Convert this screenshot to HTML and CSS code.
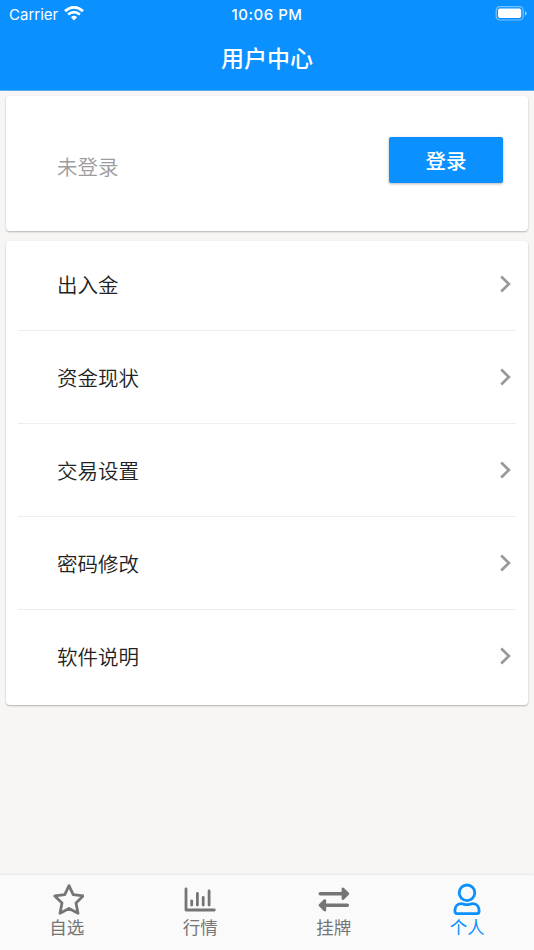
FILE: index.html
```
<!DOCTYPE html>
<html lang="zh-CN">
<head>
    <meta charset="UTF-8">
    <title>用户中心</title>
    <link rel="stylesheet" href="styles.css">
</head>
<body>
    <header class="header">
        <div class="status-bar">
            <div class="carrier">
                <span>Carrier</span>
                <svg class="wifi" width="20" height="15" viewBox="0 0 20 15">
                    <path d="M1 5.2Q10 -2.6 19 5.2" fill="none" stroke="#fff" stroke-width="2.9"/>
                    <path d="M4.1 8.6Q10 3.6 15.9 8.6" fill="none" stroke="#fff" stroke-width="2.6"/>
                    <path d="M6.9 11.2Q10 8.4 13.1 11.2L10 14.4Z" fill="#fff"/>
                </svg>
            </div>
            <div class="time">10:06 PM</div>
            <div class="battery">
                <svg width="32" height="16" viewBox="0 0 32 16">
                    <rect x="1.2" y="0.6" width="27" height="13.4" rx="3.8" fill="none" stroke="#fff" stroke-opacity=".45" stroke-width="1.2"/>
                    <rect x="3" y="2.6" width="23.2" height="9.5" rx="2" fill="#fff"/>
                    <path d="M30 4.9Q31.7 5.6 31.7 7.3Q31.7 9.1 30 9.7Z" fill="#fff" fill-opacity=".55"/>
                </svg>
            </div>
        </div>
        <h1 class="title">用户中心</h1>
    </header>

    <main class="content">
        <section class="card login-card">
            <span class="login-state">未登录</span>
            <button class="login-btn">登录</button>
        </section>

        <section class="card menu-card">
            <ul class="menu">
                <li><span>出入金</span><svg class="arrow" viewBox="0 0 12 18"><path d="M1.2 1.5L8.9 9L1.2 16.5"/></svg></li>
                <li><span>资金现状</span><svg class="arrow" viewBox="0 0 12 18"><path d="M1.2 1.5L8.9 9L1.2 16.5"/></svg></li>
                <li><span>交易设置</span><svg class="arrow" viewBox="0 0 12 18"><path d="M1.2 1.5L8.9 9L1.2 16.5"/></svg></li>
                <li><span>密码修改</span><svg class="arrow" viewBox="0 0 12 18"><path d="M1.2 1.5L8.9 9L1.2 16.5"/></svg></li>
                <li><span>软件说明</span><svg class="arrow" viewBox="0 0 12 18"><path d="M1.2 1.5L8.9 9L1.2 16.5"/></svg></li>
            </ul>
        </section>
    </main>

    <nav class="tabs">
        <a class="tab">
            <svg class="tab-icon" viewBox="0 0 34 34">
                <path d="M19 3.6L23.2 12.6L33.2 13.9L26 20.9L28 31.3L19 26.5L10 31.3L12 20.9L4.8 13.9L14.8 12.6Z"/>
            </svg>
            <span>自选</span>
        </a>
        <a class="tab">
            <svg class="tab-icon" viewBox="0 0 34 34">
                <path d="M3 7V28H31.3M8.7 18.8V23M14.4 11.3V23M20.2 15.3V23M26.1 9V23"/>
            </svg>
            <span>行情</span>
        </a>
        <a class="tab">
            <svg class="tab-icon" viewBox="0 0 34 34">
                <path class="bar" d="M3.3 11.7H26M10 23.3H30.3"/>
                <path class="head" d="M26 7L30.8 11.7L26 16.4ZM7.8 18.6L3 23.3L7.8 28Z"/>
            </svg>
            <span>挂牌</span>
        </a>
        <a class="tab active">
            <svg class="tab-icon" viewBox="0 0 34 34">
                <circle cx="17" cy="10.8" r="7.8"/>
                <path d="M11 21.6C13 21.6 14.2 22.6 17 22.6S21 21.6 23 21.6C27 21.6 29.1 25 29.1 29Q29.1 31.6 27 31.6H7Q4.9 31.6 4.9 29C4.9 25 7 21.6 11 21.6Z"/>
            </svg>
            <span>个人</span>
        </a>
    </nav>
</body>
</html>
```

FILE: styles.css
```
* {
    box-sizing: border-box;
}
body {
    margin: 0;
    height: 950px;
    display: flex;
    flex-direction: column;
    overflow: hidden;
    background: #f7f6f4;
    color: #222;
    font-family: "Noto Sans CJK SC", sans-serif;
    font-weight: 350;
}
.header {
    height: 91px;
    background: #0a90ff;
    border-bottom: 1px solid #51aefb;
    color: #fff;
}
.status-bar {
    display: grid;
    grid-template-columns: 1fr auto 1fr;
    align-items: center;
    height: 28px;
    padding: 0 7px 0 9px;
    font-family: Inter, sans-serif;
    font-size: 15px;
    font-weight: 400;
}
.carrier {
    display: flex;
    align-items: center;
    gap: 6px;
}
.wifi {
    margin-top: -2px;
}
.time {
    margin-left: -2px;
    font-weight: 500;
    letter-spacing: 0.5px;
}
.battery {
    display: flex;
    justify-content: flex-end;
}
.title {
    margin: 0;
    font-size: 23px;
    font-weight: 500;
    line-height: 59px;
    text-align: center;
}
.content {
    flex: 1;
    display: flex;
    flex-direction: column;
    gap: 10px;
    padding: 5px 6px;
}
.card {
    background: #fff;
    border-radius: 4px;
    box-shadow: 0 1px 2px rgba(0, 0, 0, 0.28);
}
.login-card {
    display: flex;
    justify-content: space-between;
    height: 135px;
    padding: 41px 25px 0 51px;
}
.login-state {
    margin-top: 4px;
    color: #9c9c9c;
    font-size: 20.5px;
    line-height: 50px;
}
.login-btn {
    width: 114px;
    height: 46px;
    padding: 0;
    border: none;
    border-radius: 2px;
    background: #0a90ff;
    box-shadow: 0 1px 3px rgba(0, 0, 0, 0.3);
    color: #fff;
    font-family: inherit;
    font-size: 20.5px;
    font-weight: 500;
}
.menu-card {
    display: flex;
    height: 464px;
}
.menu {
    flex: 1;
    margin: -3px 12px 0;
    padding: 0;
    list-style: none;
}
.menu li {
    display: flex;
    align-items: center;
    justify-content: space-between;
    height: 93px;
    padding: 0 4px 0 39px;
    border-bottom: 1px solid #eee;
    font-size: 20.5px;
}
.menu span {
    padding-bottom: 1px;
}
.menu li:last-child {
    border-bottom-color: transparent;
}
.arrow {
    width: 12px;
    height: 18px;
    fill: none;
    stroke: #999;
    stroke-width: 2.7;
}
.tabs {
    display: flex;
    height: 75px;
    background: #fafafa;
    box-shadow: 0 -1px 2px rgba(0, 0, 0, 0.06);
}
.tab {
    flex: 1;
    display: flex;
    flex-direction: column;
    align-items: center;
    padding-top: 7px;
    color: #757575;
    font-size: 17.5px;
    font-weight: 400;
    line-height: 22px;
}
.tab-icon {
    width: 34px;
    height: 34px;
    fill: none;
    stroke: currentColor;
    stroke-width: 2.8;
    stroke-linecap: round;
    stroke-linejoin: round;
}
.tab-icon .bar {
    stroke-width: 3.6;
}
.tab-icon .head {
    fill: currentColor;
}
.tab.active {
    color: #0a90ff;
}
```
